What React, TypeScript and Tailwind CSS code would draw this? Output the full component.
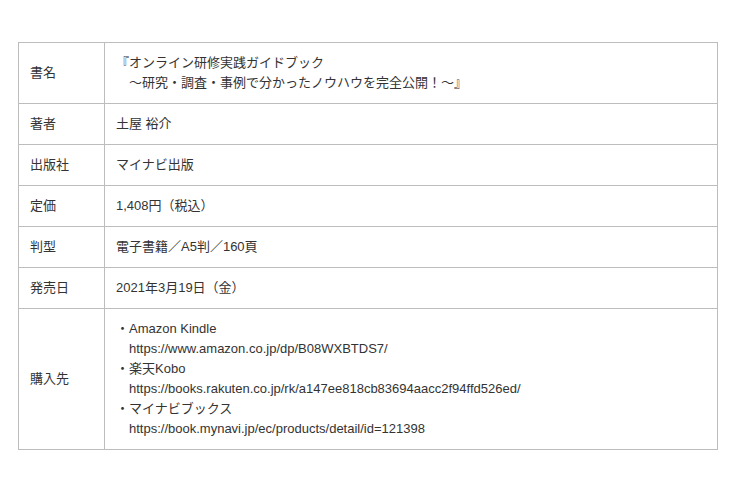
import React from "react";

const rows: { label: string; lines: string[] }[] = [
  {
    label: "書名",
    lines: [
      "『オンライン研修実践ガイドブック",
      "　～研究・調査・事例で分かったノウハウを完全公開！～』",
    ],
  },
  { label: "著者", lines: ["土屋 裕介"] },
  { label: "出版社", lines: ["マイナビ出版"] },
  { label: "定価", lines: ["1,408円（税込）"] },
  { label: "判型", lines: ["電子書籍／A5判／160頁"] },
  { label: "発売日", lines: ["2021年3月19日（金）"] },
  {
    label: "購入先",
    lines: [
      "・Amazon Kindle",
      "　https://www.amazon.co.jp/dp/B08WXBTDS7/",
      "・楽天Kobo",
      "　https://books.rakuten.co.jp/rk/a147ee818cb83694aacc2f94ffd526ed/",
      "・マイナビブックス",
      "　https://book.mynavi.jp/ec/products/detail/id=121398",
    ],
  },
];

export default function App() {
  return (
    <div
      className="w-[740px] h-[490px] bg-white pt-[42px] pl-[18px] text-[13px] leading-[20px] text-[#333]"
      style={{ fontFamily: '"Liberation Sans", "Noto Sans CJK JP", sans-serif' }}
    >
      <div className="grid w-[700px] grid-cols-[86px_613px] border-l border-t border-[#bdbdbd]">
        {rows.map((r) => (
          <React.Fragment key={r.label}>
            <div className="flex items-center border-b border-r border-[#bdbdbd] pl-[11px]">
              {r.label}
            </div>
            <div className="border-b border-r border-[#bdbdbd] py-[10px] pl-[11px] whitespace-pre">
              {r.lines.map((l, i) => (
                <div key={i}>{l}</div>
              ))}
            </div>
          </React.Fragment>
        ))}
      </div>
    </div>
  );
}
